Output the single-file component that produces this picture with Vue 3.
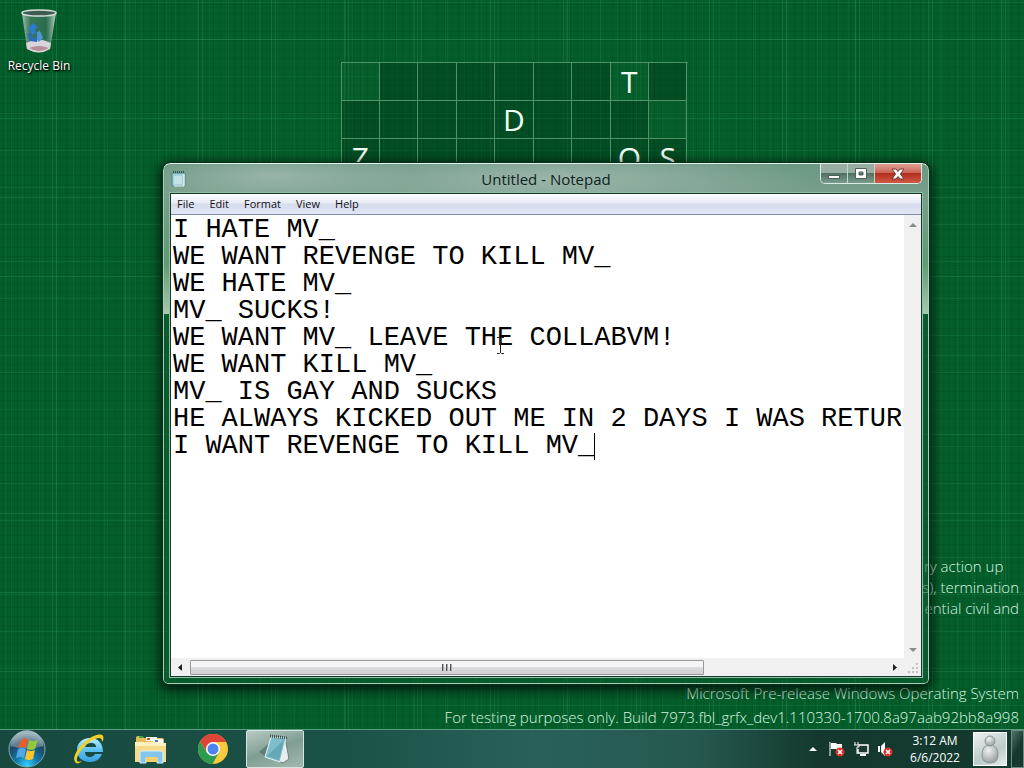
<script setup>
import { ref } from "vue";

const lines = [
  "I HATE MV_",
  "WE WANT REVENGE TO KILL MV_",
  "WE HATE MV_",
  "MV_ SUCKS!",
  "WE WANT MV_ LEAVE THE COLLABVM!",
  "WE WANT KILL MV_",
  "MV_ IS GAY AND SUCKS",
  "HE ALWAYS KICKED OUT ME IN 2 DAYS I WAS RETURN",
  "I WANT REVENGE TO KILL MV_",
];
const text = ref(lines.join("\n"));

const menus = ["File", "Edit", "Format", "View", "Help"];

// 9 columns, 3 rows
const wallpaperRows = ["       T ", "    D    ", "Z      QS"];
const tiles = wallpaperRows.join("").split("");
</script>

<template>
  <div class="screen">
    <main class="desktop">
      <div class="tiles">
        <span
          v-for="(letter, i) in tiles"
          :key="i"
          class="tile"
          :class="{ lit: [0, 7, 17].includes(i) }"
          >{{ letter.trim() }}</span
        >
      </div>

      <a class="shortcut" href="#">
        <svg width="40" height="48" viewBox="0 0 40 48">
          <defs>
            <linearGradient id="glass" x1="0" x2="1" y1="0" y2="0">
              <stop offset="0" stop-color="#b9cfc4" stop-opacity=".9" />
              <stop offset=".25" stop-color="#5b8a76" stop-opacity=".6" />
              <stop offset=".7" stop-color="#3f7560" stop-opacity=".6" />
              <stop offset="1" stop-color="#d5e2dc" stop-opacity=".9" />
            </linearGradient>
          </defs>
          <path d="M3 5 L8 41 Q20 48 31 41 L37 5Z" fill="url(#glass)" />
          <path d="M7 35 Q19 28 32 35 L31 41 Q20 48 8 41Z" fill="#d9d5da" />
          <path d="M10 40 Q20 36 30 40 Q20 46 10 40Z" fill="#b98c9b" />
          <ellipse cx="20" cy="5" rx="17" ry="3" fill="#3d5d50" stroke="#d5ddd9" stroke-width="1.5" />
          <path d="M9 21 l5 -6 5 4 -3 2 1 4 -4 2 -2 -4z" fill="#2e79c9" />
          <path d="M8 26 l3 -1 3 5 5 0 -1 4 -7 -1z" fill="#286bbb" />
          <path d="M18 24 l3 -1 3 7 -4 4 -2 -3z" fill="#4a94dd" />
        </svg>
        <span>Recycle Bin</span>
      </a>

      <div class="watermark">
        <p class="legal">ry action up&nbsp;&nbsp;&nbsp;&nbsp;</p>
        <p class="legal">s), termination</p>
        <p class="legal">ential civil and</p>
        <p class="build first">Microsoft Pre-release Windows Operating System</p>
        <p class="build">
          For testing purposes only. Build 7973.fbl_grfx_dev1.110330-1700.8a97aab92bb8a998
        </p>
      </div>

      <section class="window">
        <header class="titlebar">
          <svg class="app-icon" width="16" height="18" viewBox="0 0 16 18">
            <rect x="1" y="3" width="13" height="13" rx="1" fill="#a5d3db" stroke="#527f86" />
            <path d="M3 7h8M3 9h8M3 11h8M3 13h8" stroke="#dff3f5" />
            <path d="M13 4v12H3" stroke="#f2ffff" fill="none" />
            <path d="M2 2h12" stroke="#38575a" stroke-width="2" stroke-dasharray="1 1" />
          </svg>
          <h1>Untitled - Notepad</h1>
          <div class="controls">
            <button class="minimize" aria-label="Minimize">
              <svg width="14" height="12" viewBox="0 0 14 12">
                <rect x="1.500" y="7.500" width="11" height="3" fill="#fff" stroke="#4d6159" />
              </svg>
            </button>
            <button class="maximize" aria-label="Maximize">
              <svg width="14" height="12" viewBox="0 0 14 12">
                <path d="M1.500 .5h11v10h-11zM5 4h4v3H5z" fill="#fff" fill-rule="evenodd" stroke="#4d6159" />
              </svg>
            </button>
            <button class="close" aria-label="Close">
              <svg width="14" height="12" viewBox="0 0 14 12">
                <path
                  d="M1 1h4l2 2.500L9 1h4L9.500 6 13 11H9L7 8.500 5 11H1l3.500-5z"
                  fill="#fff"
                  stroke="#6c3a35"
                />
              </svg>
            </button>
          </div>
        </header>

        <div class="client">
          <nav class="menubar">
            <button v-for="menu in menus" :key="menu">{{ menu }}</button>
          </nav>
          <div class="editor">
            <div class="page">
              <textarea v-model="text" wrap="off" spellcheck="false" aria-label="Text"></textarea>
              <i class="caret"></i>
              <svg class="ibeam" width="9" height="17" viewBox="0 0 9 17">
                <path
                  d="M1 .5h2.500l1 1 1-1H8M4.500 1v15M1 16.500h2.500l1-1 1 1H8"
                  fill="none"
                  stroke="#222"
                />
              </svg>
            </div>
            <div class="vscroll">
              <svg width="8" height="4" viewBox="0 0 8 4"><path d="M4 0l4 4H0z" fill="#8b8b8b" /></svg>
              <svg width="8" height="4" viewBox="0 0 8 4"><path d="M0 0h8L4 4z" fill="#8b8b8b" /></svg>
            </div>
            <div class="hscroll">
              <svg width="4" height="7" viewBox="0 0 4 7"><path d="M4 0v7L0 3.500z" fill="#222" /></svg>
              <div class="track">
                <div class="thumb"><i></i><i></i><i></i></div>
              </div>
              <svg width="4" height="7" viewBox="0 0 4 7"><path d="M0 0v7l4-3.500z" fill="#222" /></svg>
            </div>
            <div class="grip">
              <svg width="10" height="10" viewBox="0 0 10 10">
                <path
                  d="M8 0h2v2H8zM4 4h2v2H4zM8 4h2v2H8zM0 8h2v2H0zM4 8h2v2H4zM8 8h2v2H8z"
                  fill="#c3c3c3"
                />
              </svg>
            </div>
          </div>
        </div>
      </section>
    </main>

    <footer class="taskbar">
      <button class="start" aria-label="Start">
        <svg width="38" height="38" viewBox="0 0 38 38">
          <defs>
            <radialGradient id="orb" cx=".5" cy=".95" r=".9">
              <stop offset="0" stop-color="#35d2ff" />
              <stop offset=".35" stop-color="#1478ab" />
              <stop offset=".7" stop-color="#1c4763" />
              <stop offset="1" stop-color="#7d9eac" />
            </radialGradient>
          </defs>
          <circle cx="19" cy="19" r="18" fill="url(#orb)" stroke="#7fa9ad" />
          <path d="M3 16a16 16 0 0 1 32 0q-16 5-32 0z" fill="#fff" opacity=".28" />
          <path d="M13 10q4-3 7-1l-2 9q-4-2-8 0z" fill="#ee5a2a" />
          <path d="M21 10q4 2 9 0l-3 9q-4 2-8 0z" fill="#92c83e" />
          <path d="M10 19q4-2 8 0l-2 9q-4-2-8 0z" fill="#4fa7e8" />
          <path d="M19 20q4 2 8 0l-2 9q-4 2-8 0z" fill="#fdc52c" />
        </svg>
      </button>
      <button class="task" aria-label="Internet Explorer">
        <svg width="34" height="34" viewBox="0 0 34 34">
          <defs>
            <linearGradient id="ie" x1="0" x2="0" y1="0" y2="1">
              <stop offset="0" stop-color="#b9ecff" />
              <stop offset=".5" stop-color="#5cc3f2" />
              <stop offset="1" stop-color="#38a0df" />
            </linearGradient>
          </defs>
          <path
            d="M31 20H13c0 3 2 5 5 5 2 0 4-1 5-3h7c-2 5-6 8-12 8-8 0-13-5-13-12S10 6 18 6s13 5 13 14zM13 15h11c0-3-2-4-5-4s-5 1-6 4z"
            fill="url(#ie)"
            fill-rule="evenodd"
          />
          <path
            d="M4 31C-1 27 5 16 14 9 21 3 29 1 31 4c1 2 0 5-1 6 0-3-1-4-3-4-4 0-10 4-14 8-6 6-9 12-8 15 1 1 3 1 5 0-2 2-4 3-6 2z"
            fill="#f3cf2b"
          />
        </svg>
      </button>
      <button class="task" aria-label="Windows Explorer">
        <svg width="34" height="30" viewBox="0 0 34 30">
          <path d="M2 4q0-2 2-2h4l2 2h18q2 0 2 2v21H2z" fill="#e8bd5c" />
          <path d="M5 2h4v2H5z" fill="#3ca03c" />
          <path d="M12 3h11v4H12zM19 5h10v4H19z" fill="#fff" />
          <path d="M13 4h3v2h-3z" fill="#c8502c" />
          <path d="M21 6h3v2h-3z" fill="#3f7fca" />
          <path d="M1 8h20l2 1h9v19H1z" fill="#f5dc8c" />
          <path d="M1 8h20l2 1h9v3H1z" fill="#fff1bd" />
          <path d="M6 19q0-2 2-2h18q3 0 3 2v10h-6v-5H12v5H6z" fill="#83c5ec" stroke="#d8f1ff" />
          <path d="M12 23h11v5H12z" fill="#f5ce66" />
        </svg>
      </button>
      <button class="task" aria-label="Google Chrome">
        <svg width="30" height="30" viewBox="0 0 30 30">
          <circle cx="15" cy="15" r="15" fill="#f7cb3d" />
          <path d="M15 8h13.300L28 7.500A15 15 0 0 0 2 7.500L9 18z" fill="#de4437" />
          <path d="M2 7.500A15 15 0 0 0 14.500 30L21 18.500 9 18.500z" fill="#2a9c4f" />
          <circle cx="15" cy="15" r="7" fill="#fff" />
          <circle cx="15" cy="15" r="5.500" fill="#4a84ec" />
        </svg>
      </button>
      <button class="task active" aria-label="Untitled - Notepad">
        <svg width="36" height="30" viewBox="0 0 36 30">
          <path d="M11 10L2 18l9 6z" fill="#456b69" opacity=".6" />
          <path d="M28 3l4 22-6 4-6-3z" fill="#e9edef" stroke="#6d7c7b" />
          <path d="M14 3l15 1-6 24-15-5z" fill="#7ebdc9" stroke="#e5f4f4" />
          <path d="M27 6L10 22l12 4z" fill="#5ba0ad" opacity=".7" />
          <path d="M13 2l17 2" stroke="#39494a" stroke-width="3" stroke-dasharray="1 1" />
        </svg>
      </button>

      <div class="tray">
        <svg width="8" height="4" viewBox="0 0 8 4"><path d="M4 0l4 4H0z" fill="#fff" /></svg>
        <svg width="16" height="16" viewBox="0 0 16 16">
          <path d="M1 1v14" stroke="#fff" />
          <path d="M2 2h5l1 1h5v6H8L7 8H2z" fill="#fff" />
          <circle cx="11" cy="11" r="4.500" fill="#d8302b" />
          <path d="M9 9l4 4m0-4l-4 4" stroke="#fff" stroke-width="1.500" />
        </svg>
        <svg width="16" height="16" viewBox="0 0 16 16">
          <path d="M6 4h9v8H5V8" fill="#1c3a35" stroke="#fff" stroke-width="1.500" />
          <path d="M2 1v3M5 1v3M1 4h5v2H4v7" fill="none" stroke="#fff" />
          <path d="M7 14h6" stroke="#fff" stroke-width="2" />
        </svg>
        <svg width="16" height="16" viewBox="0 0 16 16">
          <path d="M1 5h2v6H1zM4 5l4-4v14l-4-4z" fill="#fff" />
          <circle cx="11" cy="11" r="4.500" fill="#d8302b" />
          <path d="M9 9l4 4m0-4l-4 4" stroke="#fff" stroke-width="1.500" />
        </svg>
      </div>
      <time class="clock">3:12 AM<br />6/6/2022</time>
      <button class="user" aria-label="User">
        <svg width="32" height="32" viewBox="0 0 32 32">
          <defs>
            <radialGradient id="person" cx=".4" cy=".3" r=".8">
              <stop offset="0" stop-color="#f1f2f3" />
              <stop offset="1" stop-color="#8c9598" />
            </radialGradient>
          </defs>
          <path d="M8 22q0-10 8-10t8 10q0 8-8 8t-8-8z" fill="url(#person)" stroke="#8d9799" />
          <circle cx="16" cy="8" r="5" fill="url(#person)" stroke="#8d9799" />
        </svg>
      </button>
      <button class="peek" aria-label="Show desktop"></button>
    </footer>
  </div>
</template>

<style>
body {
  margin: 0;
}
</style>

<style scoped>
.screen {
  display: flex;
  flex-direction: column;
  height: 100vh;
  overflow: hidden;
  font-family: "Open Sans", "Noto Sans", sans-serif;
}

button {
  padding: 0;
  border: 0;
  background: none;
  font: inherit;
}

p,
h1 {
  margin: 0;
}

.desktop {
  position: relative;
  flex: 1;
  overflow: hidden;
  background:
    repeating-linear-gradient(90deg, transparent 0 5px, rgba(70, 190, 110, 0.08) 5px 6px, transparent 6px 17px),
    repeating-linear-gradient(90deg, transparent 0 11px, rgba(80, 190, 120, 0.08) 11px 12px, transparent 12px 31px),
    repeating-linear-gradient(90deg, transparent 0 52px, rgba(90, 200, 130, 0.16) 52px 53px, transparent 53px 56px, rgba(90, 200, 130, 0.14) 56px 57px, transparent 57px 73px),
    repeating-linear-gradient(90deg, transparent 0 3px, rgba(0, 40, 15, 0.14) 3px 4px, transparent 4px 7px),
    repeating-linear-gradient(0deg, transparent 0 57px, rgba(90, 200, 130, 0.16) 57px 58px, transparent 58px 79px),
    repeating-linear-gradient(0deg, transparent 0 23px, rgba(80, 190, 120, 0.12) 23px 24px, transparent 24px 37px),
    repeating-linear-gradient(0deg, transparent 0 4px, rgba(0, 40, 15, 0.12) 4px 5px, transparent 5px 9px),
    #045e2b;
}

.tiles {
  display: grid;
  grid-template-columns: repeat(9, 1fr);
  grid-auto-rows: 38px;
  width: 346px;
  margin: 62px auto 0;
  border-top: 1px solid #4f9268;
  border-left: 1px solid #4f9268;
  transform: translateX(2px);
}
.tile {
  display: flex;
  align-items: center;
  justify-content: center;
  border-right: 1px solid #4f9268;
  border-bottom: 1px solid #4f9268;
  background: rgba(0, 52, 26, 0.4);
  color: #f2fff5;
  font-size: 30px;
  line-height: 34px;
}
.tile.lit {
  background: rgba(10, 95, 48, 0.2);
}

.shortcut {
  position: absolute;
  top: 8px;
  left: 2px;
  display: flex;
  flex-direction: column;
  align-items: center;
  gap: 2px;
  width: 74px;
  color: #fff;
  font-size: 12px;
  line-height: 16px;
  text-decoration: none;
  text-shadow: 0 1px 2px #000, 1px 1px 2px #000;
}

.watermark {
  position: absolute;
  right: 5px;
  bottom: 0;
  color: #d8f5e0;
  font-size: 15px;
  font-weight: 300;
  text-align: right;
  white-space: nowrap;
}
.legal {
  line-height: 21px;
}
.build {
  line-height: 24px;
}
.build.first {
  margin-top: 62px;
}

.window {
  position: absolute;
  top: 163px;
  left: 163px;
  box-sizing: border-box;
  display: flex;
  flex-direction: column;
  width: 766px;
  height: 521px;
  padding: 0 6px 6px;
  border: 1px solid #a9d0b7;
  border-top-color: #e3efe8;
  border-radius: 7px 7px 5px 5px;
  outline: 1px solid #06331b;
  background:
    radial-gradient(ellipse 140px 30px at 110px 12px, rgba(180, 198, 190, 0.6), transparent),
    radial-gradient(ellipse 260px 34px at 390px 15px, rgba(165, 188, 178, 0.8), transparent),
    linear-gradient(#6b9883 0, #789f8c 30px, #5f9a72 100px, #a5c9ae 150px, rgba(14, 90, 48, 0.55) 150px);
  box-shadow: 0 3px 12px 3px rgba(0, 0, 0, 0.75);
}

.titlebar {
  position: relative;
  display: flex;
  align-items: center;
  height: 29px;
}
.app-icon {
  margin-left: 1px;
}
.titlebar h1 {
  flex: 1;
  margin-right: 17px;
  color: #10231c;
  font-size: 15px;
  font-weight: 400;
  text-align: center;
}
.controls {
  position: absolute;
  top: 0;
  right: 0;
  display: flex;
  height: 19px;
  border: 1px solid #dcebe3;
  border-top: 0;
  border-radius: 0 0 5px 5px;
  overflow: hidden;
}
.controls button {
  display: flex;
  align-items: center;
  justify-content: center;
  width: 27px;
  border-right: 1px solid #c3d6cc;
  background: linear-gradient(#97aea3 0 45%, #527163 50%, #7b9c8c);
}
.controls .close {
  width: 46px;
  border-right: 0;
  background: linear-gradient(#dc9588 0 10%, #cc6656 45%, #b42e1d 50%, #cf5a43);
}

.client {
  display: flex;
  flex: 1;
  flex-direction: column;
  min-height: 0;
  border: 1px solid #17372a;
  outline: 1px solid #8fc0a4;
  background: #fff;
}
.menubar {
  display: flex;
  gap: 1px;
  height: 20px;
  border-bottom: 1px solid #7d8ea5;
  background: linear-gradient(#fff, #e6eaf5 45%, #d7dced 50%, #e1e6f4);
}
.menubar button {
  padding: 0 7px 0 6px;
  color: #111;
  font-size: 11px;
  line-height: 20px;
}
.menubar button + button {
  padding-left: 7px;
}

.editor {
  display: grid;
  flex: 1;
  grid-template-columns: 1fr 17px;
  grid-template-rows: 1fr 18px;
  min-height: 0;
}
.page {
  position: relative;
  font-family: "Liberation Mono", monospace;
  font-size: 27px;
  line-height: 27px;
}
textarea {
  box-sizing: border-box;
  display: block;
  width: 100%;
  height: 100%;
  padding: 2px 0 0 2px;
  border: 0;
  outline: 0;
  overflow: hidden;
  resize: none;
  color: #000;
  font: inherit;
  white-space: pre;
}
.caret {
  position: absolute;
  top: 218px;
  left: calc(2px + 26ch);
  width: 1px;
  height: 27px;
  background: #000;
}
.ibeam {
  position: absolute;
  top: 122px;
  left: 325px;
}

.vscroll {
  display: flex;
  flex-direction: column;
  align-items: center;
  justify-content: space-between;
  padding: 8px 0 6px;
  background: #f0f0f1;
}
.hscroll {
  display: flex;
  align-items: center;
  gap: 8px;
  padding: 0 7px;
  background: #f0f0f1;
}
.track {
  flex: 1;
}
.thumb {
  box-sizing: border-box;
  display: flex;
  align-items: center;
  justify-content: center;
  gap: 2px;
  width: 74%;
  height: 15px;
  border: 1px solid #9a9a9c;
  border-radius: 1px;
  background: linear-gradient(#f5f5f5 0 45%, #dcdcde 50%, #cfcfd1);
}
.thumb i {
  width: 2px;
  height: 7px;
  background: linear-gradient(90deg, #555 50%, #aaa 50%);
}
.grip {
  display: flex;
  align-items: flex-end;
  justify-content: flex-end;
  padding: 3px;
  background: #f0f0f1;
}

.taskbar {
  display: flex;
  align-items: center;
  box-sizing: border-box;
  height: 39px;
  border-top: 1px solid #5d9a86;
  background: linear-gradient(90deg, #17493f, #1b5247 34%, #29615a 52%, #25594f 68%, #14382f 80%, #133a2f);
}
.start {
  display: flex;
  margin: 0 14px 0 8px;
}
.task {
  box-sizing: border-box;
  display: flex;
  align-items: center;
  justify-content: center;
  width: 58px;
  height: 38px;
  margin-right: 4px;
}
.task.active {
  border: 1px solid #d5e4de;
  border-radius: 2px;
  background: linear-gradient(160deg, #b9cbc4, #7f9e93 50%, #a3b9b0);
}
.tray {
  display: flex;
  align-items: center;
  gap: 8px;
  margin: 0 4px 0 auto;
}
.tray svg:first-child {
  margin-right: 4px;
}
.clock {
  width: 76px;
  color: #fff;
  font-size: 12px;
  line-height: 17px;
  text-align: center;
}
.user {
  box-sizing: border-box;
  display: flex;
  align-items: center;
  justify-content: center;
  width: 34px;
  height: 34px;
  border: 1px solid #fff;
  background: linear-gradient(150deg, #eef1f1, #bccaca 60%, #e6ecec);
}
.peek {
  width: 13px;
  height: 38px;
  margin-left: 4px;
  border: 1px solid #6b8d81;
  background: linear-gradient(120deg, #51736a, #17382f 50%);
}
</style>
